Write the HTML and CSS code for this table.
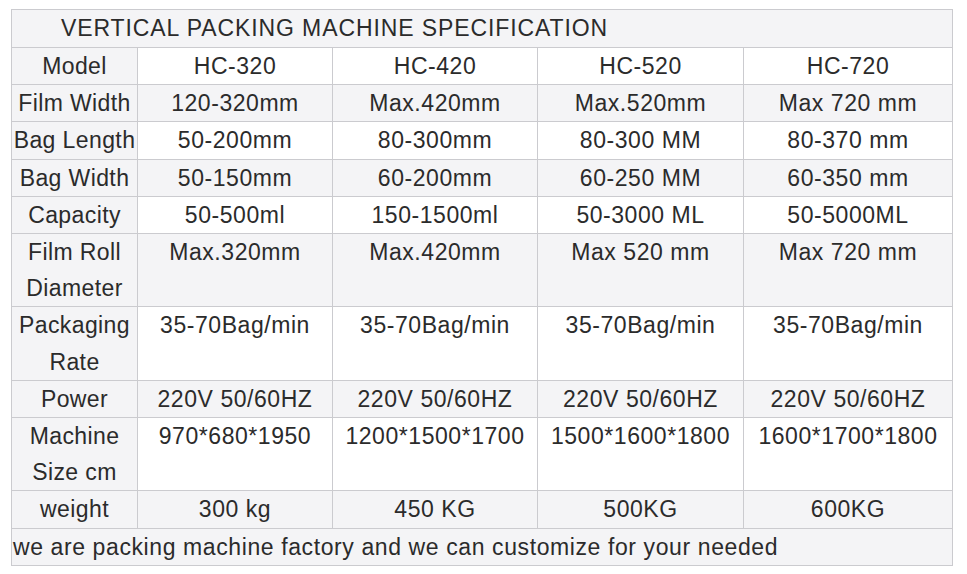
FILE: index.html
```html
<!DOCTYPE html>
<html>
<head>
<meta charset="utf-8">
<link rel="stylesheet" href="styles.css">
</head>
<body>
<table class="spec">
  <colgroup>
    <col class="c1"><col class="c2"><col class="c3"><col class="c4"><col class="c5">
  </colgroup>
  <tr class="title"><td colspan="5">VERTICAL PACKING MACHINE SPECIFICATION</td></tr>
  <tr><th>Model</th><td>HC-320</td><td>HC-420</td><td>HC-520</td><td>HC-720</td></tr>
  <tr class="alt"><th>Film Width</th><td>120-320mm</td><td>Max.420mm</td><td>Max.520mm</td><td>Max 720 mm</td></tr>
  <tr><th>Bag Length</th><td>50-200mm</td><td>80-300mm</td><td>80-300 MM</td><td>80-370 mm</td></tr>
  <tr class="alt"><th>Bag Width</th><td>50-150mm</td><td>60-200mm</td><td>60-250 MM</td><td>60-350 mm</td></tr>
  <tr><th>Capacity</th><td>50-500ml</td><td>150-1500ml</td><td>50-3000 ML</td><td>50-5000ML</td></tr>
  <tr class="alt"><th>Film Roll Diameter</th><td>Max.320mm</td><td>Max.420mm</td><td>Max 520 mm</td><td>Max 720 mm</td></tr>
  <tr><th>Packaging Rate</th><td>35-70Bag/min</td><td>35-70Bag/min</td><td>35-70Bag/min</td><td>35-70Bag/min</td></tr>
  <tr class="alt"><th>Power</th><td>220V 50/60HZ</td><td>220V 50/60HZ</td><td>220V 50/60HZ</td><td>220V 50/60HZ</td></tr>
  <tr><th>Machine Size cm</th><td>970*680*1950</td><td>1200*1500*1700</td><td>1500*1600*1800</td><td>1600*1700*1800</td></tr>
  <tr class="alt"><th>weight</th><td>300 kg</td><td>450 KG</td><td>500KG</td><td>600KG</td></tr>
  <tr class="foot"><td colspan="5">we are packing machine factory and we can customize for your needed</td></tr>
</table>
</body>
</html>
```
FILE: styles.css
```css
html, body {
  margin: 0;
  padding: 0;
  background: #ffffff;
}
body {
  padding: 9px 0 0 11px;
  font-family: "Liberation Sans", Arial, sans-serif;
  color: #2b2b2b;
}
.spec {
  border-collapse: collapse;
  table-layout: fixed;
  width: 941px;
  font-size: 23px;
  letter-spacing: 0.55px;
}
.c1 { width: 126px; }
.c2 { width: 195px; }
.c3 { width: 205px; }
.c4 { width: 206px; }
.c5 { width: 209px; }
.spec th, .spec td {
  border: 1px solid #cbcbcf;
  padding: 0;
  line-height: 36.2px;
  text-align: center;
  vertical-align: top;
  font-weight: normal;
  background: #ffffff;
  overflow: hidden;
  white-space: normal;
}
.spec th {
  background: #f4f4f6;
  letter-spacing: 0.4px;
}
.spec .alt td {
  background: #f4f4f6;
}
.spec .title td {
  background: #f4f4f6;
  text-align: left;
  padding-left: 49px;
  line-height: 37px;
  letter-spacing: 0.9px;
}
.spec .foot td {
  background: #f4f4f6;
  text-align: left;
  padding-left: 1px;
  letter-spacing: 0.6px;
}
```
